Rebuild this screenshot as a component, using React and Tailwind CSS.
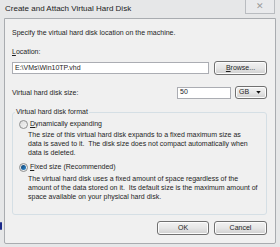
import React from 'react';

const face =
  'flex items-center rounded-[3px] border border-[#707070] bg-gradient-to-b from-[#f2f2f2] via-[#e6e6e6] to-[#cfcfcf] text-[7px] text-[#1e1e1e] shadow-[inset_0_0_0_1px_#fcfcfc]';
const btn = `${face} justify-center`;

const Radio = ({ checked }) => (
  <span className="relative flex h-[9px] w-[9px] items-center justify-center rounded-full border border-[#8e8f8f] bg-gradient-to-br from-[#dcdcdc] to-[#f6f6f6]">
    {checked && (
      <span className="h-[5px] w-[5px] rounded-full bg-gradient-to-br from-[#0f3f6e] to-[#2f8fd8]" />
    )}
  </span>
);

const App = () => {
  return (
    <div
      className="relative flex h-[247px] w-[280px] flex-col overflow-hidden bg-[#e6e7e8] text-[#1e1e1e]"
      style={{ fontFamily: '"Liberation Sans", Arial, sans-serif' }}
    >
      {/* Title bar */}
      <div className="flex h-[18px] items-start justify-between pl-[5px] pr-[5px]">
        <span className="mt-[4px] text-[8px] leading-[10px] text-[#222]">
          Create and Attach Virtual Hard Disk
        </span>
        <div className="flex h-[14px] w-[30px] items-center justify-center border-x border-b border-[#b9bcc0] bg-[#e9eaec] text-[9px] leading-none text-[#9a9a9a]">
          ✕
        </div>
      </div>

      {/* Content panel */}
      <div className="mx-[4px] flex h-[226px] flex-col rounded-b-[2px] border border-[#a9acb0] bg-[#f0f0f0] pl-[7px] pr-[8px] text-[7px]">
        <p className="mt-[9px] leading-[10px]">
          Specify the virtual hard disk location on the machine.
        </p>

        <p className="mt-[9px] leading-[10px]">
          <span className="underline">L</span>ocation:
        </p>

        <div className="mt-[4px] flex items-center gap-[5px]">
          <div className="flex h-[12px] w-[197px] items-center border border-[#abadb3] bg-white px-[2px]">
            E:\VMs\Win10TP.vhd
          </div>
          <button className={`${btn} h-[14px] w-[53px]`}>
            <span className="underline">B</span>rowse...
          </button>
        </div>

        <div className="mt-[11px] flex items-center">
          <span className="flex-1 leading-[10px]">Virtual hard disk size:</span>
          <div className="flex h-[12px] w-[54px] items-center border border-[#abadb3] bg-white px-[2px]">
            50
          </div>
          <div className={`${face} ml-[4px] h-[13px] w-[32px] justify-between pl-[3px] pr-[5px]`}>
            <span>GB</span>
            <svg width="5" height="3" viewBox="0 0 6 4">
              <path d="M0 0H6L3 3.5Z" fill="#111" />
            </svg>
          </div>
        </div>

        <fieldset className="mt-[9px] h-[107px] rounded-[3px] border border-[#d5dfe5] pl-[2px] pr-[4px]">
          <legend className="px-[1px] leading-[8px]">Virtual hard disk format</legend>
          <div className="pl-[4px]">
            <div className="mt-[3px] flex items-center gap-[2px]">
              <Radio />
              <span className="leading-[10px]">
                <span className="underline">D</span>ynamically expanding
              </span>
            </div>
            <p className="mt-[1px] pl-[9px] leading-[9px]">
              The size of this virtual hard disk expands to a fixed maximum size as
              <br />
              data is saved to it.&nbsp; The disk size does not compact automatically when
              <br />
              data is deleted.
            </p>
            <div className="mt-[5px] flex items-center gap-[2px]">
              <Radio checked />
              <span className="leading-[10px]">
                <span className="underline">F</span>ixed size (Recommended)
              </span>
            </div>
            <p className="mt-[2px] pl-[9px] leading-[9px]">
              The virtual hard disk uses a fixed amount of space regardless of the
              <br />
              amount of the data stored on it.&nbsp; Its default size is the maximum amount of
              <br />
              space available on your physical hard disk.
            </p>
          </div>
        </fieldset>

        <div className="mt-[6px] flex justify-end gap-[5px]">
          <button className={`${btn} h-[14px] w-[52px]`}>OK</button>
          <button className={`${btn} h-[14px] w-[53px]`}>Cancel</button>
        </div>
      </div>

      {/* left frame glint */}
      <div className="absolute left-0 top-[222px] h-[8px] w-[2px] rounded-full bg-[#1b2a8a]" />
    </div>
  );
};

export default App;
